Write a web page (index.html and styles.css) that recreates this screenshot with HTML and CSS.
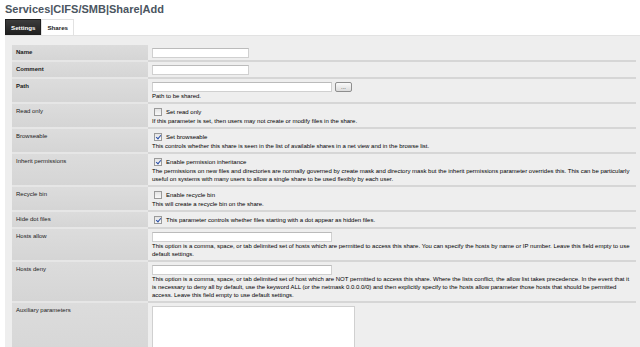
FILE: index.html
```html
<!DOCTYPE html>
<html lang="en">

<head>
    <meta charset="UTF-8">
    <title>Services | CIFS/SMB | Share | Add</title>
    <link rel="stylesheet" href="styles.css">
</head>

<body>
    <h1 class="page-title">Services|CIFS/SMB|Share|Add</h1>
    <div class="wrap">
        <div class="tabs">
            <a class="tab active" href="#">Settings</a>
            <a class="tab" href="#">Shares</a>
        </div>
        <div class="panel">
            <table class="form">
                <tr>
                    <td class="label req">Name</td>
                    <td class="field"><input type="text" class="text short"></td>
                </tr>
                <tr>
                    <td class="label req">Comment</td>
                    <td class="field"><input type="text" class="text short"></td>
                </tr>
                <tr>
                    <td class="label req">Path</td>
                    <td class="field">
                        <div class="path-line">
                            <input type="text" class="text long">
                            <button type="button" class="browse">...</button>
                        </div>
                        <div class="help">Path to be shared.</div>
                    </td>
                </tr>
                <tr>
                    <td class="label">Read only</td>
                    <td class="field">
                        <label class="check"><input type="checkbox"> Set read only</label>
                        <div class="help">If this parameter is set, then users may not create or modify files in the share.</div>
                    </td>
                </tr>
                <tr>
                    <td class="label">Browseable</td>
                    <td class="field">
                        <label class="check"><input type="checkbox" checked> Set browseable</label>
                        <div class="help">This controls whether this share is seen in the list of available shares in a net view and in the browse list.</div>
                    </td>
                </tr>
                <tr>
                    <td class="label">Inherit permissions</td>
                    <td class="field">
                        <label class="check"><input type="checkbox" checked> Enable permission inheritance</label>
                        <div class="help">The permissions on new files and directories are normally governed by create mask and directory mask but the inherit permissions parameter overrides this. This can be particularly useful on systems with many users to allow a single share to be used flexibly by each user.</div>
                    </td>
                </tr>
                <tr>
                    <td class="label">Recycle bin</td>
                    <td class="field">
                        <label class="check"><input type="checkbox"> Enable recycle bin</label>
                        <div class="help">This will create a recycle bin on the share.</div>
                    </td>
                </tr>
                <tr>
                    <td class="label">Hide dot files</td>
                    <td class="field">
                        <label class="check"><input type="checkbox" checked> This parameter controls whether files starting with a dot appear as hidden files.</label>
                    </td>
                </tr>
                <tr>
                    <td class="label">Hosts allow</td>
                    <td class="field">
                        <input type="text" class="text long">
                        <div class="help">This option is a comma, space, or tab delimited set of hosts which are permitted to access this share. You can specify the hosts by name or IP number. Leave this field empty to use default settings.</div>
                    </td>
                </tr>
                <tr>
                    <td class="label">Hosts deny</td>
                    <td class="field">
                        <input type="text" class="text long">
                        <div class="help">This option is a comma, space, or tab delimited set of host which are NOT permitted to access this share. Where the lists conflict, the allow list takes precedence. In the event that it is necessary to deny all by default, use the keyword ALL (or the netmask 0.0.0.0/0) and then explicitly specify to the hosts allow parameter those hosts that should be permitted access. Leave this field empty to use default settings.</div>
                    </td>
                </tr>
                <tr>
                    <td class="label">Auxiliary parameters</td>
                    <td class="field"><textarea class="aux"></textarea></td>
                </tr>
            </table>
        </div>
    </div>
</body>

</html>
```

FILE: styles.css
```css
body {
    font-family: "Liberation Sans", Arial, sans-serif;
    margin: 0;
    padding: 0;
    background: #fff;
    color: #000;
}

.page-title {
    margin: 0;
    padding: 1px 0 0 5px;
    height: 18px;
    font-size: 11px;
    line-height: 17px;
    color: #4b5561;
}

.wrap {
    padding-left: 5px;
}

.tabs {
    display: flex;
    height: 16px;
}

.tab {
    display: flex;
    align-items: center;
    padding: 0 5px;
    font-size: 6.2px;
    font-weight: bold;
    color: #222;
    text-decoration: none;
    background: #fff;
    border: 1px solid #e2e2e2;
    border-bottom: none;
}

.tab.active {
    background: linear-gradient(#3c3c3c, #1e1e1e);
    color: #fff;
    border-color: #1e1e1e;
}

.panel {
    border-top: 1px solid #e2e2e2;
    background: #eeeeee;
    padding: 9px 4px 0 7px;
}

/* form table */
.form {
    width: 100%;
    border-collapse: collapse;
    font-size: 6px;
    line-height: 8px;
}

.form td {
    vertical-align: top;
    padding: 3px 4px 2px;
    border-bottom: 2px solid #d6d6d6;
}

.form td.label {
    width: 128px;
    background: linear-gradient(#dcdcdc, #d5d5d5);
    border-bottom-color: #e6e6e6;
    color: #1a1a1a;
}

.form td.req {
    font-weight: bold;
}

.text {
    display: block;
    box-sizing: border-box;
    height: 10px;
    margin: 0;
    padding: 0 2px;
    border: 1px solid #d0d0d0;
    border-top-color: #bbb;
    background: #fff;
    font-size: 6px;
}

.short {
    width: 97px;
}

.long {
    width: 180px;
}

.path-line {
    display: flex;
    align-items: center;
    gap: 3px;
}

.browse {
    box-sizing: border-box;
    width: 17px;
    height: 10px;
    padding: 0;
    border: 1px solid #8e8e8e;
    border-radius: 2px;
    background: linear-gradient(#fafafa, #dcdcdc);
    font-size: 6px;
    line-height: 6px;
    color: #222;
}

.help {
    color: #000;
}

.check {
    display: flex;
    align-items: center;
    gap: 4px;
    height: 10px;
    color: #000;
}

.check input {
    -webkit-appearance: none;
    appearance: none;
    box-sizing: border-box;
    width: 8px;
    height: 8px;
    margin: 0 0 0 2px;
    border: 1px solid #9a9a9a;
    background: linear-gradient(#e4e4e4, #f8f8f8);
    position: relative;
    flex: none;
}

.check input:checked::after {
    content: "";
    position: absolute;
    left: 2px;
    top: 0;
    width: 2px;
    height: 4px;
    border: solid #2a4fa8;
    border-width: 0 1px 1px 0;
    transform: rotate(40deg);
}

.aux {
    display: block;
    box-sizing: border-box;
    width: 203px;
    height: 60px;
    margin: 0;
    border: 1px solid #d0d0d0;
    background: #fff;
    resize: none;
}
```
